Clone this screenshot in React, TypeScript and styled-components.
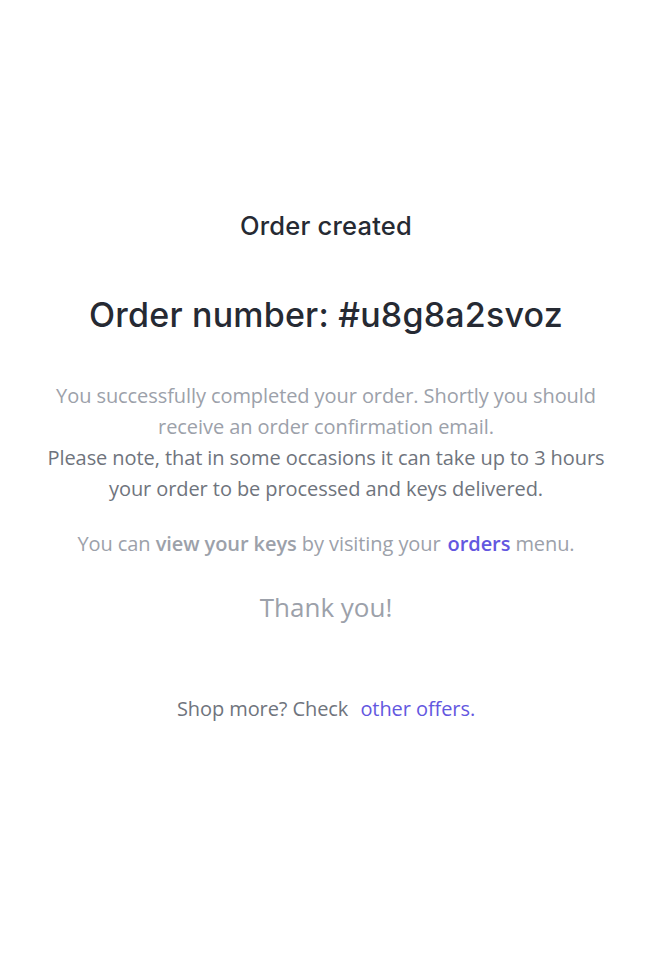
import React from "react";
import styled, { createGlobalStyle } from "styled-components";

const Global = createGlobalStyle`
  html, body { margin: 0; padding: 0; background: #ffffff; }
  body { font-family: "Open Sans", sans-serif; }
`;

const Page = styled.main`
  width: 652px;
  min-height: 961px;
  box-sizing: border-box;
  padding-top: 207px;
  display: flex;
  flex-direction: column;
  align-items: center;
  text-align: center;
`;

const Title = styled.h2`
  margin: 0;
  font-family: "Inter", sans-serif;
  font-weight: 500;
  font-size: 25.5px;
  line-height: 38px;
  color: #262a33;
  letter-spacing: 0.2px;
`;

const OrderNumber = styled.h1`
  margin: 45px 0 0;
  font-family: "Inter", sans-serif;
  font-weight: 500;
  font-size: 34px;
  line-height: 50px;
  color: #262a33;
  letter-spacing: 0.2px;
`;

const Text = styled.p<{ $tone?: "light" | "dark" }>`
  margin: 0;
  font-family: "Open Sans", sans-serif;
  font-size: 20px;
  line-height: 31px;
  letter-spacing: -0.08px;
  color: ${(p) => (p.$tone === "dark" ? "#6f747d" : "#9ca1aa")};
`;

const Paragraphs = styled.div`
  margin-top: 40px;
  display: flex;
  flex-direction: column;
`;

const KeysNote = styled(Text)`
  margin-top: 24px;
  letter-spacing: -0.08px;
`;

const Strong = styled.b`
  font-weight: 600;
`;

const Link = styled.a<{ $bold?: boolean }>`
  margin-left: 7px;
  color: #6357e0;
  font-weight: ${(p) => (p.$bold ? 600 : 400)};
  text-decoration: none;
`;

const Thanks = styled.p`
  margin: 28px 0 0;
  font-family: "Open Sans", sans-serif;
  font-size: 26px;
  line-height: 40px;
  color: #9ca1aa;
`;

const ShopMore = styled(Text)`
  margin-top: 66px;
  color: #6f747d;
`;

export default function App() {
  return (
    <>
      <Global />
      <Page>
        <Title>Order created</Title>
        <OrderNumber>Order number: #u8g8a2svoz</OrderNumber>
        <Paragraphs>
          <Text>
            You successfully completed your order. Shortly you should
            <br />
            receive an order confirmation email.
          </Text>
          <Text $tone="dark">
            Please note, that in some occasions it can take up to 3 hours
            <br />
            your order to be processed and keys delivered.
          </Text>
        </Paragraphs>
        <KeysNote>
          You can <Strong>view your keys</Strong> by visiting your
          <Link $bold href="#">orders</Link> menu.
        </KeysNote>
        <Thanks>Thank you!</Thanks>
        <ShopMore>
          Shop more? Check <Link href="#">other offers.</Link>
        </ShopMore>
      </Page>
    </>
  );
}
